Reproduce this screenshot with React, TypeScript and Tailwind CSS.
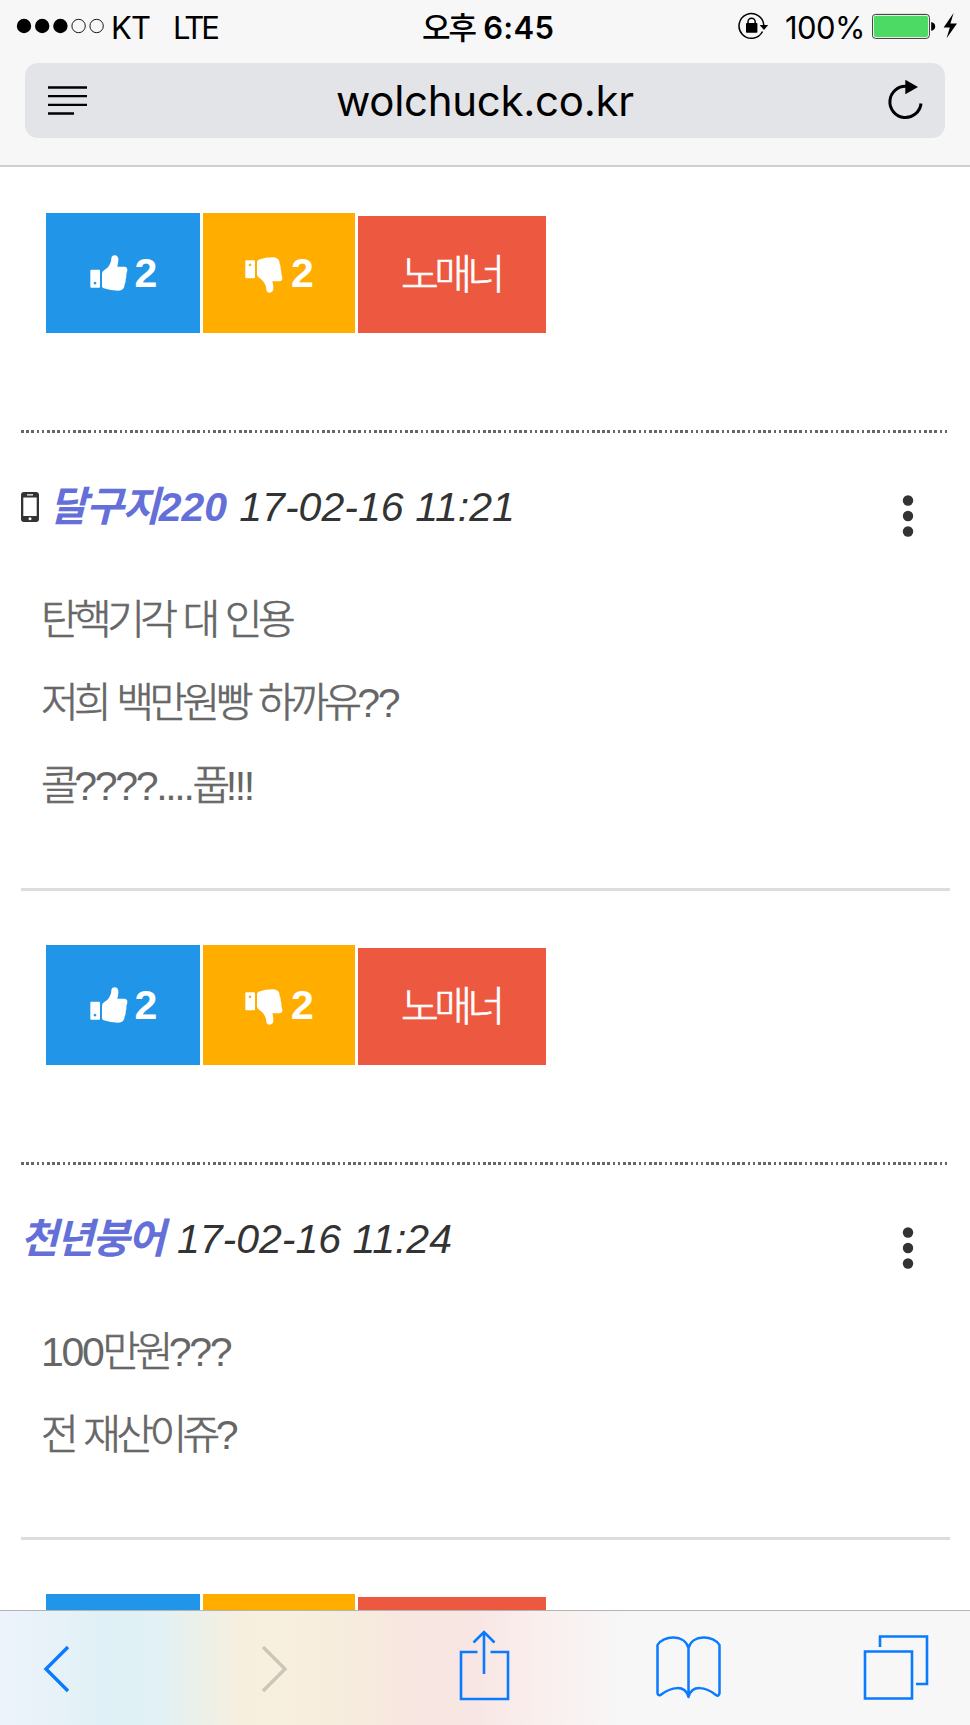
import React from "react";

const HELV = "font-['Liberation_Sans','Noto_Sans_CJK_KR',sans-serif]";

/** Splits mixed text so that Hangul runs can be set tighter than Latin ones. */
function Mixed({ text, hangul }: { text: string; hangul: string }) {
  const parts = text.split(/([\uAC00-\uD7A3]+)/).filter(Boolean);
  return (
    <>
      {parts.map((part, i) =>
        /[\uAC00-\uD7A3]/.test(part) ? (
          <span key={i} className={hangul}>
            {part}
          </span>
        ) : (
          <React.Fragment key={i}>{part}</React.Fragment>
        ),
      )}
    </>
  );
}

function StatusBar() {
  return (
    <div className="flex h-[52px] items-center font-['Inter','Noto_Sans_CJK_KR',sans-serif] text-[31px] leading-[52px] whitespace-nowrap text-black">
      <svg className="ml-[16px] h-[52px] w-[90px] shrink-0" viewBox="16 0 90 52">
        <circle cx="24" cy="26" r="7.2" />
        <circle cx="42.2" cy="26" r="7.2" />
        <circle cx="60.4" cy="26" r="7.2" />
        <circle cx="78.6" cy="26" r="6.7" fill="none" stroke="#000" strokeWidth="0.9" />
        <circle cx="96.6" cy="26" r="6.7" fill="none" stroke="#000" strokeWidth="0.9" />
      </svg>
      <span className="ml-[5px] w-[62px] shrink-0 pt-[3px] tracking-[-0.8px]">KT</span>
      <span className="w-[249px] shrink-0 pt-[3px] tracking-[-3.2px]">LTE</span>
      <span className="w-[316px] shrink-0 pt-[3px] font-semibold tracking-[0.3px]">
        <span className="font-medium tracking-[-2px]">오후</span> 6:45
      </span>
      <svg className="h-[52px] w-[34px] shrink-0" viewBox="738 0 34 52">
        <path d="M762.5 31.5 A12.4 12.4 0 1 1 763.8 25" fill="none" stroke="#000" strokeWidth="1.5" />
        <path d="M759.6 25 h8.6 l-4.2 5z" />
        <rect x="746" y="23" width="11.4" height="9.7" rx="0.8" />
        <path d="M748 24 v-2.2 a3.6 3.6 0 0 1 7.2 0 V24" fill="none" stroke="#000" strokeWidth="1.5" />
      </svg>
      <span className="ml-[13px] w-[87px] shrink-0 pt-[3px] tracking-[-0.6px]">100%</span>
      <svg className="h-[52px] w-[90px] shrink-0" viewBox="872 0 90 52">
        <rect x="872.4" y="14.4" width="57" height="24" rx="3.2" fill="#fff" stroke="#333" strokeWidth="1" />
        <rect x="873.8" y="15.8" width="54.2" height="21.2" rx="2" fill="#4cd964" />
        <path d="M931.2 22 q4 1 4 4.4 t-4 4.4z" />
        <path d="M953.6 13 L943.6 27.6 h6.2 L946.6 38.2 L957 23.6 h-6.6z" />
      </svg>
    </div>
  );
}

function AddressBar() {
  return (
    <div className="mx-[25px] mt-[11px] flex h-[75px] items-center rounded-[13px] bg-[#e3e4e7]">
      <svg className="ml-[23px] h-[75px] w-[39px]" viewBox="48 63 39 75">
        <path d="M48 87.5 h39 M48 96.2 h39 M48 104.8 h39 M48 113.5 h26" stroke="#000" strokeWidth="2.3" />
      </svg>
      <span className="ml-[249px] font-['Inter',sans-serif] text-[42px] leading-[75px] tracking-[-0.3px] text-black">
        wolchuck.co.kr
      </span>
      <svg className="mr-[22px] ml-auto h-[75px] w-[36px]" viewBox="887 63 36 75">
        <path d="M906.5 86.3 A15.6 15.6 0 1 0 921 103.5" fill="none" stroke="#000" strokeWidth="3" />
        <path d="M905.3 79.8 L918 87 L905.3 94.2z" />
      </svg>
    </div>
  );
}

function Thumb({ down = false }: { down?: boolean }) {
  return (
    <svg
      className={down ? "mt-[4px] h-[36px] w-[38px] -scale-y-100" : "mt-[-1px] h-[36px] w-[38px]"}
      viewBox="0 0 114 108"
      fill="#fff"
    >
      <path
        fillRule="evenodd"
        d="M4 44 H27 Q30 44 30 47 V95 Q30 98 27 98 H4 Q1 98 1 95 V47 Q1 44 4 44z M15 80.500 a4 4 0 1 0 .01 0z"
      />
      <path d="M36 56 Q36 50 42 46 Q56 38 61 24 Q64 18 64 10 Q65 1 74 1 Q84 2 85 12 Q86 20 82 35 H103 Q113 36 112 46 Q111 52 109 58 Q110 66 107 73 Q108 81 104 88 Q104 97 99 102 Q94 107 84 107 Q62 107 41 100 Q36 98 36 92z" />
    </svg>
  );
}

function VoteButtons() {
  return (
    <div className={`ml-[46px] flex h-[120px] items-end gap-[2.500px] text-[41px] text-white ${HELV}`}>
      <button className="flex h-[120px] w-[154px] items-center bg-[#2196e8] pl-[43.500px] font-bold">
        <Thumb />
        <span className="ml-[7px] pt-[2px]">2</span>
      </button>
      <button className="flex h-[120px] w-[152.500px] items-center bg-[#ffae00] pl-[42.500px] font-bold">
        <Thumb down />
        <span className="ml-[8px] pt-[2px]">2</span>
      </button>
      <button className="h-[117px] w-[188px] bg-[#ec5840] pt-[3px] pl-[43.500px] text-left font-light tracking-[-4.500px] [-webkit-text-stroke:0.7px_white]">
        노매너
      </button>
    </div>
  );
}

function PhoneIcon() {
  return (
    <svg className="mr-[11px] h-[30px] w-[18px]" viewBox="0 0 18 30">
      <path
        fill="#333"
        fillRule="evenodd"
        d="M3 0 H15 Q18 0 18 3 V27 Q18 30 15 30 H3 Q0 30 0 27 V3 Q0 0 3 0z M2.300 5.500 V24 H15.700 V5.500z M6 2.300 V3.400 H12 V2.300z M9 25.300 a1.500 1.500 0 1 0 .01 0z"
      />
    </svg>
  );
}

interface CommentProps {
  author: string;
  date: string;
  lines: string[];
  mobile?: boolean;
}

function Comment({ author, date, lines, mobile }: CommentProps) {
  return (
    <article className="mx-[20.500px]">
      <div className="h-[3px] bg-[repeating-linear-gradient(90deg,#666_0_2.600px,transparent_2.600px_5.190px)]" />
      <header className={`mt-[47px] flex h-[54px] items-center text-[41px] leading-[54px] whitespace-nowrap italic ${HELV}`}>
        {mobile && <PhoneIcon />}
        <span className="font-bold text-[#6470d8]">
          <Mixed text={author} hangul={mobile ? "tracking-[-1.300px]" : "tracking-[-2px]"} />
        </span>
        <span className={mobile ? "ml-[12px] tracking-[0.050px] text-[#333]" : "ml-[13.500px] text-[#333]"}>{date}</span>
        <svg className="mt-[17px] mr-[36px] ml-auto h-[44px] w-[12px]" viewBox="0 0 12 44" fill="#333">
          <circle cx="6" cy="6.500" r="5.200" />
          <circle cx="6" cy="22" r="5.200" />
          <circle cx="6" cy="37.500" r="5.200" />
        </svg>
      </header>
      <div className={`mt-[45px] ml-[20.500px] text-[41px] leading-[83px] tracking-[-2.300px] text-[#666] ${HELV}`}>
        {lines.map((line) => (
          <p key={line} className="h-[83px] whitespace-nowrap">
            <Mixed text={line} hangul="font-light tracking-[-4.600px] [-webkit-text-stroke:0.7px_#666]" />
          </p>
        ))}
      </div>
      <hr className="mt-[60px] h-[2.500px] border-0 bg-[#ddd]" />
    </article>
  );
}

function Toolbar() {
  return (
    <nav className="absolute inset-x-0 bottom-0 flex h-[115px] border-t border-[#b4b4b4] bg-[linear-gradient(90deg,#eef3fb_0px,#e6f2f8_60px,#dff1f6_100px,#e1f1f5_155px,#edf0e8_205px,#f6efde_240px,#f8f0de_275px,#f6ecdd_350px,#f8e6e1_410px,#f8e6e4_475px,#f9efed_540px,#f7f7f7_625px)]">
      <svg className="ml-[43px] h-[114px] w-[28px]" viewBox="43 1611 28 114" fill="none" stroke="#0a7aff" strokeWidth="3.400">
        <path d="M68 1647 L46 1669 L68 1691" />
      </svg>
      <svg className="ml-[189px] h-[114px] w-[28px]" viewBox="260 1611 28 114" fill="none" stroke="#cdc6b8" strokeWidth="3.400">
        <path d="M263 1647 L285 1669 L263 1691" />
      </svg>
      <svg className="ml-[170px] h-[114px] w-[52px]" viewBox="458 1611 52 114" fill="none" stroke="#0a7aff" strokeWidth="2.600">
        <path d="M477.500 1652 H461 V1699 H508 V1652 H490.500 M484 1632 V1674 M473.500 1642.500 L484 1632 L494.500 1642.500" />
      </svg>
      <svg className="ml-[145px] h-[114px] w-[68px]" viewBox="656 1611 68 114" fill="none" stroke="#0a7aff" strokeWidth="2.500" strokeLinejoin="round">
        <path d="M689.500 1697 V1648 C686 1634 664 1635 658.500 1645 V1693 Q659 1696 661.500 1695 C672 1687 686 1684 689.500 1697 C693 1684 707 1687 717 1695 Q720 1697 720.500 1693 V1645 C715 1635 693 1634 689.500 1648" />
      </svg>
      <svg className="ml-[139px] h-[114px] w-[68px]" viewBox="863 1611 68 114" fill="none" stroke="#0a7aff" strokeWidth="2.600">
        <path d="M866 1651.500 H913 V1698.500 H866z M881 1647 V1636.500 H928 V1684 H917" />
      </svg>
    </nav>
  );
}

export default function App() {
  return (
    <div className="relative h-[1725px] w-[970px] overflow-hidden bg-white">
      <div className="h-[167px] border-b-2 border-[#cfcfcf] bg-[#f7f7f7]">
        <StatusBar />
        <AddressBar />
      </div>
      <main>
        <div className="mt-[46px] mb-[97px]">
          <VoteButtons />
        </div>
        <Comment mobile author="달구지220" date="17-02-16 11:21" lines={["탄핵기각 대 인용", "저희 백만원빵 하까유??", "콜????....풉!!!"]} />
        <div className="mt-[54.500px] mb-[97px]">
          <VoteButtons />
        </div>
        <Comment author="천년붕어" date="17-02-16 11:24" lines={["100만원???", "전 재산이쥬?"]} />
        <div className="mt-[54.500px]">
          <VoteButtons />
        </div>
      </main>
      <Toolbar />
    </div>
  );
}
